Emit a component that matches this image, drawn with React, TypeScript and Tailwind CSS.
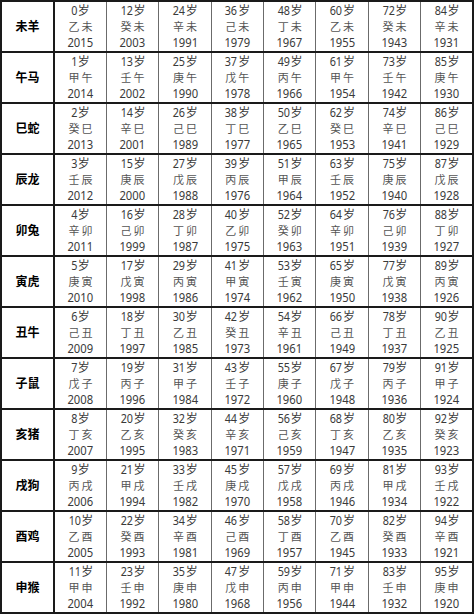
const stems = "甲乙丙丁戊己庚辛壬癸";
const branches = "子丑寅卯辰巳午未申酉戌亥";
const labels = [
  "未羊",
  "午马",
  "巳蛇",
  "辰龙",
  "卯兔",
  "寅虎",
  "丑牛",
  "子鼠",
  "亥猪",
  "戌狗",
  "酉鸡",
  "申猴",
];

const ganzhi = (year: number) =>
  stems[(year - 4) % 10] + branches[(year - 4) % 12];

function Cell({ age }: { age: number }) {
  const year = 2015 - age;
  return (
    <td className="border-x border-[#6b6b6b] p-0 text-center align-middle">
      <div className="flex h-[48px] flex-col items-center justify-center">
        <div className="h-[16px] text-[12px] leading-[16px] text-[#3a3a3a]">
          <span className="inline-block scale-x-90">{age}</span>岁
        </div>
        <div className="h-[16px] pl-[2px] text-[11px] leading-[16px] tracking-[2px] text-[#555]">
          {ganzhi(year)}
        </div>
        <div className="h-[16px] scale-x-90 text-[12.5px] leading-[16px] text-[#3a3a3a]">
          {year}
        </div>
      </div>
    </td>
  );
}

export default function App() {
  return (
    <div className="h-[616px] w-[475px] overflow-hidden bg-white">
      <table
        className="w-[474px] table-fixed border-collapse border-2 border-[#1a1a1a]"
        style={{ fontFamily: '"Noto Sans", "Noto Sans CJK SC", sans-serif' }}
      >
        <colgroup>
          <col className="w-[53px]" />
          {Array.from({ length: 8 }, (_, i) => (
            <col key={i} />
          ))}
        </colgroup>
        <tbody>
          {labels.map((label, r) => (
            <tr key={label} className="h-[51px] border-y-2 border-[#1a1a1a]">
              <td className="border-r-2 border-[#1a1a1a] p-0 text-center align-middle text-[12px] leading-[16px] font-bold text-black">
                {label}
              </td>
              {Array.from({ length: 8 }, (_, c) => (
                <Cell key={c} age={r + 12 * c} />
              ))}
            </tr>
          ))}
        </tbody>
      </table>
    </div>
  );
}
